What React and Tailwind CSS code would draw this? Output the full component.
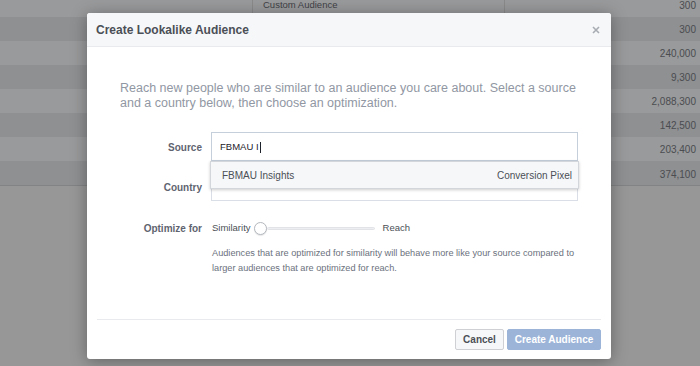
import React from "react";

const rows = [
  { n: "300", dark: false, label: "Custom Audience" },
  { n: "300", dark: true },
  { n: "240,000", dark: false },
  { n: "9,300", dark: true },
  { n: "2,088,300", dark: false },
  { n: "142,500", dark: true },
  { n: "203,400", dark: false },
  { n: "374,100", dark: true },
];

export default function App() {
  return (
    <div
      className="relative w-[700px] h-[366px] overflow-hidden bg-[#979797]"
      style={{ fontFamily: '"Liberation Sans", Arial, sans-serif' }}
    >
      {/* background table */}
      <div className="-mt-[7px] flex flex-col border-b border-[#828384]">
        {rows.map((r, i) => (
          <div
            key={i}
            className={`flex h-[24px] items-center ${r.dark ? "bg-[#8f9092]" : "bg-[#999a9b]"} ${i === 7 ? "h-[18px] items-start pt-[6px]" : ""}`}
          >
            <div className={`w-[253px] h-full ${i === 0 ? "border-r border-[#8a8a8a]" : ""}`} />
            <div className={`w-[252px] h-full flex items-center pl-[10px] text-[9.5px] text-[#3f4146] ${i === 0 ? "border-r border-[#8a8a8a]" : ""}`}>
              {r.label || ""}
            </div>
            <div className="flex-1 pr-[4px] text-right text-[10px] text-[#4a4c50]">{r.n}</div>
          </div>
        ))}
      </div>

      {/* modal */}
      <div className="absolute left-[87px] top-[13px] w-[524px] h-[346px] bg-white rounded-[3px] shadow-[0_2px_16px_rgba(0,0,0,0.35)] flex flex-col overflow-hidden">
        <div className="h-[34px] shrink-0 bg-[#f6f7f9] border-b border-[#e9eaed] flex items-center justify-between pl-[9px] pr-[11px]">
          <span className="text-[12px] font-bold text-[#4b4f56]">Create Lookalike Audience</span>
          <svg width="8" height="8" viewBox="0 0 8 8">
            <path d="M1 1 L7 7 M7 1 L1 7" stroke="#a7abb2" strokeWidth="1.6" />
          </svg>
        </div>

        <div className="flex-1 flex flex-col">
          <p className="mt-[34px] ml-[33px] w-[467px] text-[12.5px] leading-[15px] text-[#9197a3]">
            Reach new people who are similar to an audience you care about. Select a source and a country below, then choose an optimization.
          </p>

          <div className="mt-[21px] flex flex-col">
            {/* Source */}
            <div className="flex items-center h-[29px]">
              <div className="w-[115px] pt-[1px] text-right text-[10px] font-bold text-[#5f6470]">Source</div>
              <div className="relative ml-[9px] w-[367px] h-[29px]">
                <div className="h-full border border-[#c5cedb] flex items-center pl-[8px] pt-[1px] text-[9.5px] text-[#1d2129]">
                  FBMAU I<span className="inline-block w-[1px] h-[11px] bg-[#1d2129] ml-[1px]" />
                </div>
                <div className="absolute left-[-1px] top-[29px] w-[369px] h-[28px] z-10 bg-[#f6f7f9] border border-[#d3d6db] shadow-[0_1px_3px_rgba(0,0,0,0.2)] flex items-center justify-between pl-[11px] pr-[6px] text-[10px] text-[#4b4f56]">
                  <span>FBMAU Insights</span>
                  <span>Conversion Pixel</span>
                </div>
              </div>
            </div>

            {/* Country */}
            <div className="mt-[11px] flex items-center h-[29px]">
              <div className="w-[115px] pt-[2px] text-right text-[10px] font-bold text-[#5f6470]">Country</div>
              <div className="ml-[9px] w-[367px] h-[29px] border border-[#dadee6]" />
            </div>

            {/* Optimize */}
            <div className="mt-[17px] flex items-center h-[20px]">
              <div className="w-[115px] text-right text-[10px] font-bold text-[#5f6470]">Optimize for</div>
              <div className="ml-[10px] flex items-center">
                <span className="text-[9.5px] text-[#4b4f56]">Similarity</span>
                <span className="ml-[3px] w-[13px] h-[13px] rounded-full bg-white border border-[#b3b7bd] shadow-[0_1px_1px_rgba(0,0,0,0.1)]" />
                <span className="w-[108px] h-[3px] bg-[#eceef1] border border-[#e1e3e7] rounded-[2px]" />
                <span className="ml-[8px] text-[9.5px] text-[#4b4f56]">Reach</span>
              </div>
            </div>

            <p className="mt-[8px] ml-[125px] w-[368px] text-[9.2px] leading-[15px] text-[#6b717d]">
              Audiences that are optimized for similarity will behave more like your source compared to larger audiences that are optimized for reach.
            </p>
          </div>
        </div>

        <div className="mx-[10px] border-t border-[#e9eaed] h-[40px] shrink-0 flex items-center justify-end gap-[3px]">
          <button className="h-[21px] w-[49px] bg-[#f6f7f9] border border-[#ced0d4] rounded-[2px] text-[10px] font-bold text-[#4b4f56]">
            Cancel
          </button>
          <button className="h-[21px] w-[94px] bg-[#9cb4d8] border border-[#9cb4d8] rounded-[2px] text-[10px] font-bold text-white">
            Create Audience
          </button>
        </div>
      </div>
    </div>
  );
}
